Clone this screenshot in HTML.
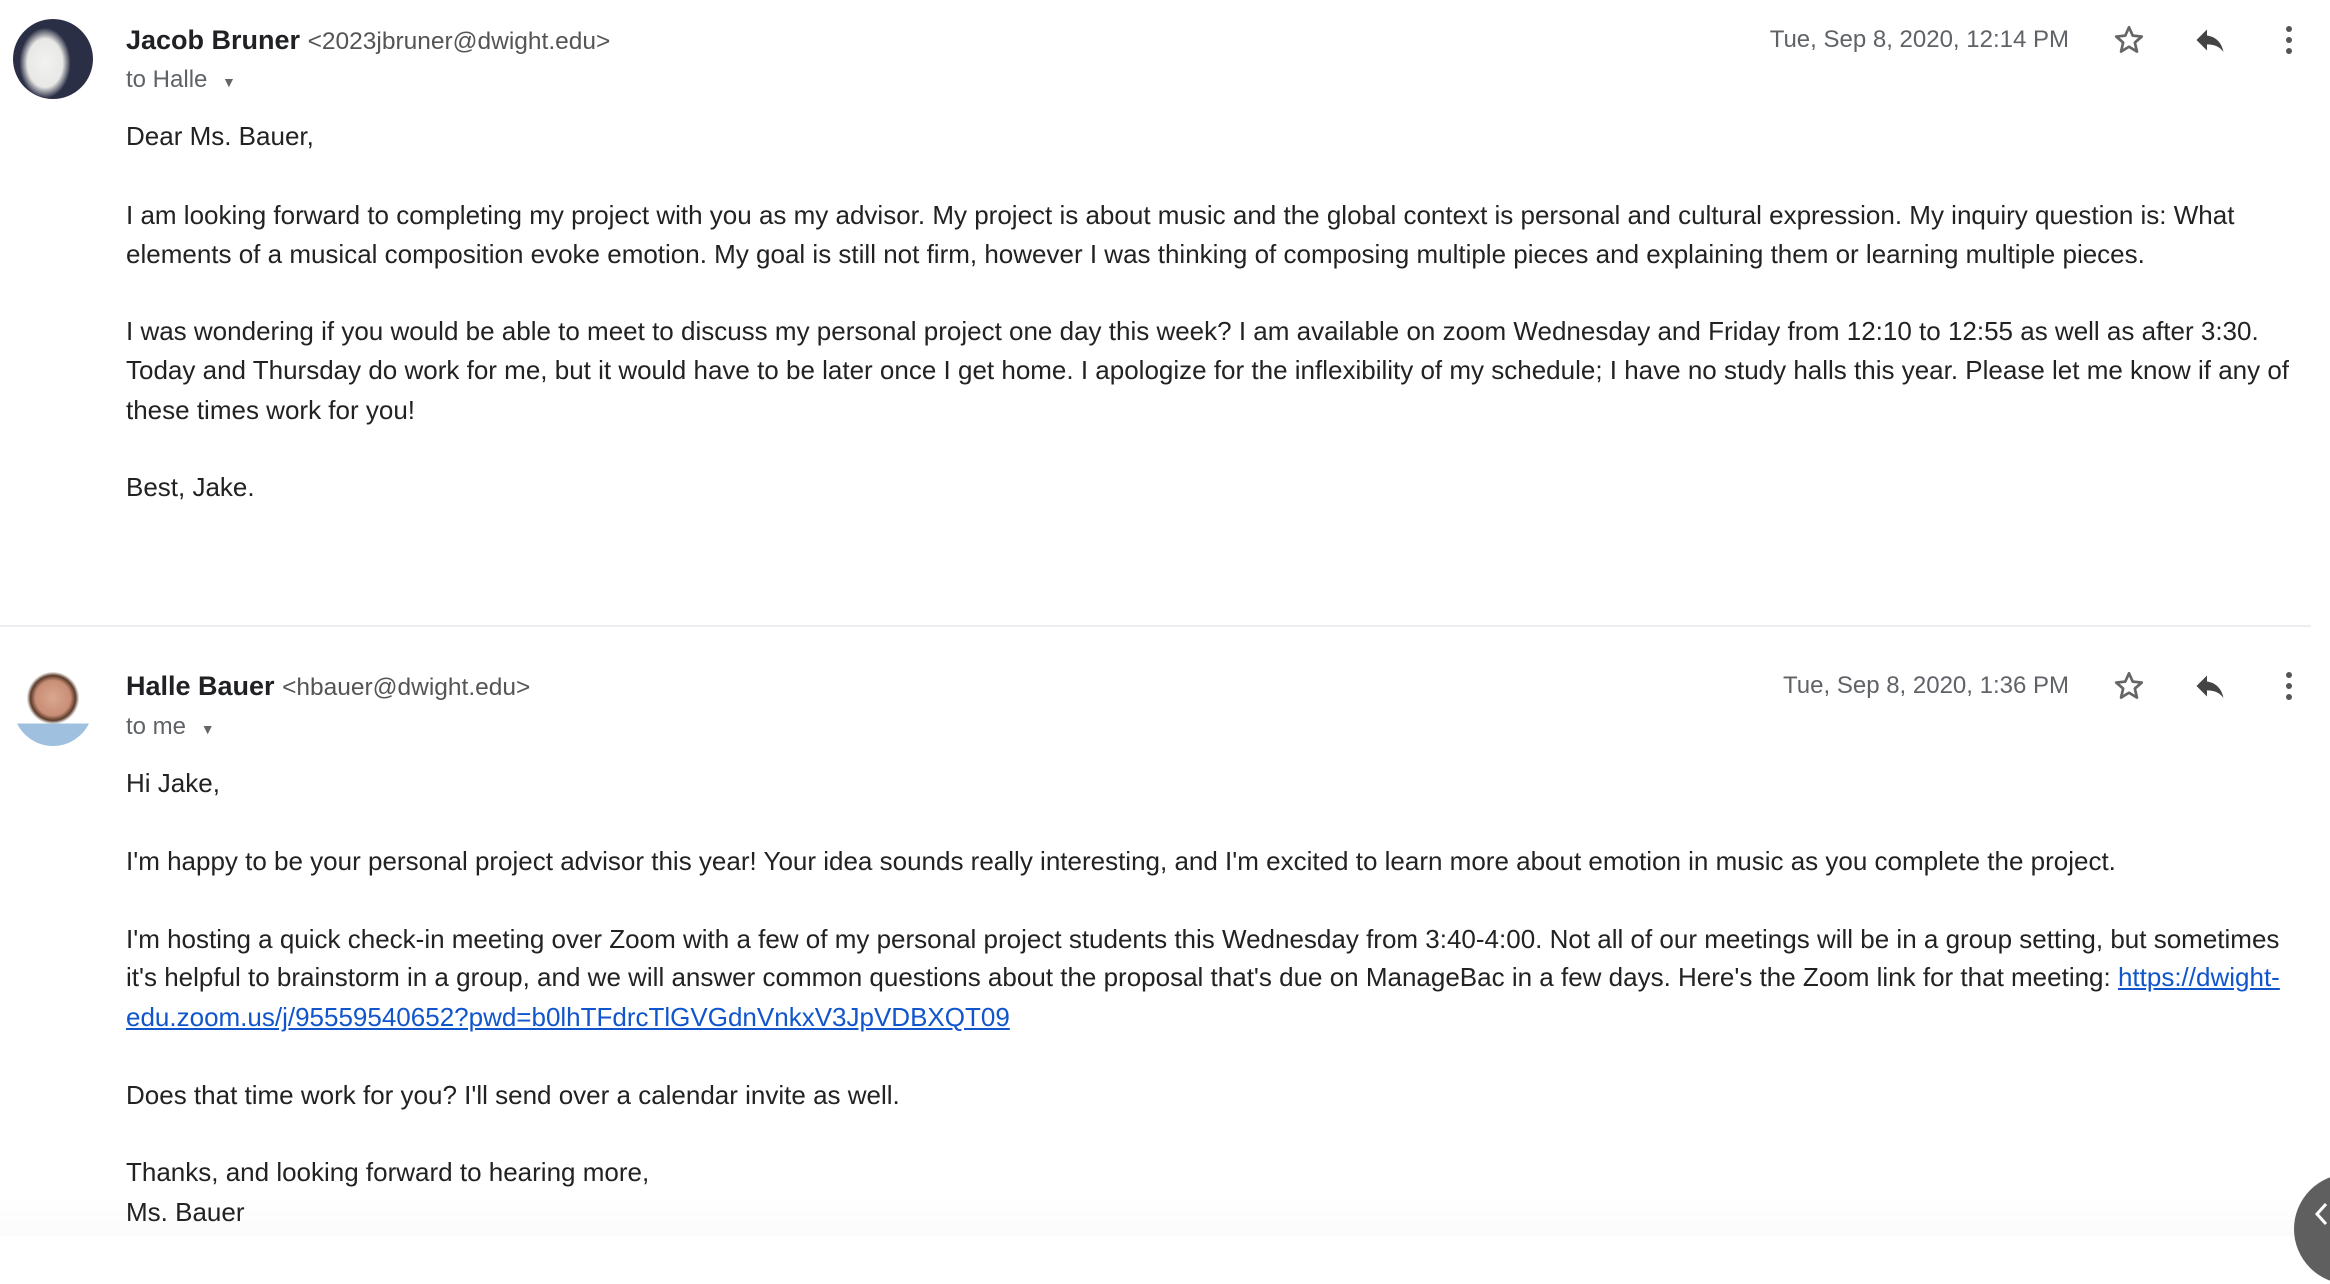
<!DOCTYPE html>
<html><head><meta charset="utf-8"><style>
*{margin:0;padding:0;box-sizing:border-box}
html,body{width:2330px;height:1236px;overflow:hidden;background:#fff;font-family:"Liberation Sans",Arial,sans-serif;color:#222}
.a{position:absolute;white-space:nowrap}
.b{font-size:26px;line-height:40px;left:126px;color:#222}
.name{font-size:27px;font-weight:bold;color:#202124;line-height:40px;left:126px}
.name span{font-weight:normal;font-size:24.5px;color:#555}
.to{font-size:24px;color:#5f6368;left:126px;line-height:36px}
.date{font-size:24px;color:#5f6368;line-height:36px;right:261px}
.av{position:absolute;width:80px;height:80px;border-radius:50%;overflow:hidden}
a{color:#1155cc;text-decoration:underline}
</style></head><body>
<div class="av" style="left:13px;top:19px;background:radial-gradient(ellipse 40% 55% at 40% 55%,#f2f2f0 0,#e8e8e6 55%,#2b2f45 80%);"></div>
<div class="a name" style="top:20px">Jacob Bruner <span>&lt;2023jbruner@dwight.edu&gt;</span></div>
<div class="a to" style="top:62px">to Halle <span style="font-size:14px;color:#666;margin-left:8px">▼</span></div>
<div class="a date" style="top:22px">Tue, Sep 8, 2020, 12:14 PM</div>
<svg class="a" style="left:2111px;top:22px" width="36" height="36" viewBox="0 0 24 24"><path d="M12 3.5l2.5 5.6 6 .6-4.6 4 1.4 6-5.3-3.2-5.3 3.2 1.4-6-4.6-4 6-.6z" fill="none" stroke="#666" stroke-width="1.8" stroke-linejoin="round"/></svg>
<svg class="a" style="left:2192px;top:22px" width="36" height="36" viewBox="0 0 24 24"><path d="M10 9V5l-7 7 7 7v-4.1c5 0 8.5 1.6 11 5.1-1-5-4-10-11-11z" fill="#444"/></svg>
<svg class="a" style="left:2275px;top:22px" width="28" height="36" viewBox="0 0 28 36"><circle cx="14" cy="7" r="3" fill="#555"/><circle cx="14" cy="18" r="3" fill="#555"/><circle cx="14" cy="29" r="3" fill="#555"/></svg>

<div class="a b" style="top:116px">Dear Ms. Bauer,</div>
<div class="a b" style="top:195px">I am looking forward to completing my project with you as my advisor. My project is about music and the global context is personal and cultural expression. My inquiry question is: What</div>
<div class="a b" style="top:234px">elements of a musical composition evoke emotion. My goal is still not firm, however I was thinking of composing multiple pieces and explaining them or learning multiple pieces.</div>
<div class="a b" style="top:311px">I was wondering if you would be able to meet to discuss my personal project one day this week? I am available on zoom Wednesday and Friday from 12:10 to 12:55 as well as after 3:30.</div>
<div class="a b" style="top:350px">Today and Thursday do work for me, but it would have to be later once I get home. I apologize for the inflexibility of my schedule; I have no study halls this year. Please let me know if any of</div>
<div class="a b" style="top:390px">these times work for you!</div>
<div class="a b" style="top:467px">Best, Jake.</div>

<div class="a" style="left:0;top:625px;width:2311px;height:2px;background:#eceef1"></div>

<div class="av" style="left:13px;top:666px;background:radial-gradient(circle at 50% 40%,#d9a78f 0,#c98e76 28%,#5b3b2a 36%,#fff 42%,#fff 60%,#fff 100%);"></div>
<div class="av" style="left:13px;top:666px;background:linear-gradient(to bottom,transparent 0,transparent 72%,#9fc0df 72%,#9fc0df 100%);"></div>
<div class="a name" style="top:666px">Halle Bauer <span>&lt;hbauer@dwight.edu&gt;</span></div>
<div class="a to" style="top:709px">to me <span style="font-size:14px;color:#666;margin-left:8px">▼</span></div>
<div class="a date" style="top:668px">Tue, Sep 8, 2020, 1:36 PM</div>
<svg class="a" style="left:2111px;top:668px" width="36" height="36" viewBox="0 0 24 24"><path d="M12 3.5l2.5 5.6 6 .6-4.6 4 1.4 6-5.3-3.2-5.3 3.2 1.4-6-4.6-4 6-.6z" fill="none" stroke="#666" stroke-width="1.8" stroke-linejoin="round"/></svg>
<svg class="a" style="left:2192px;top:668px" width="36" height="36" viewBox="0 0 24 24"><path d="M10 9V5l-7 7 7 7v-4.1c5 0 8.5 1.6 11 5.1-1-5-4-10-11-11z" fill="#444"/></svg>
<svg class="a" style="left:2275px;top:668px" width="28" height="36" viewBox="0 0 28 36"><circle cx="14" cy="7" r="3" fill="#555"/><circle cx="14" cy="18" r="3" fill="#555"/><circle cx="14" cy="29" r="3" fill="#555"/></svg>

<div class="a b" style="top:763px">Hi Jake,</div>
<div class="a b" style="top:841px">I'm happy to be your personal project advisor this year! Your idea sounds really interesting, and I'm excited to learn more about emotion in music as you complete the project.</div>
<div class="a b" style="top:919px">I'm hosting a quick check-in meeting over Zoom with a few of my personal project students this Wednesday from 3:40-4:00. Not all of our meetings will be in a group setting, but sometimes</div>
<div class="a b" style="top:957px">it's helpful to brainstorm in a group, and we will answer common questions about the proposal that's due on ManageBac in a few days. Here's the Zoom link for that meeting: <a>https://dwight-</a></div>
<div class="a b" style="top:997px"><a>edu.zoom.us/j/95559540652?pwd=b0lhTFdrcTlGVGdnVnkxV3JpVDBXQT09</a></div>
<div class="a b" style="top:1075px">Does that time work for you? I'll send over a calendar invite as well.</div>
<div class="a b" style="top:1152px">Thanks, and looking forward to hearing more,</div>
<div class="a b" style="top:1192px">Ms. Bauer</div>

<div class="a" style="left:0;top:1196px;width:2330px;height:40px;background:linear-gradient(to bottom,rgba(0,0,0,0),rgba(0,0,0,0.015))"></div>
<div class="a" style="left:2294px;top:1174px;width:110px;height:110px;border-radius:50%;background:#5f5f5f"></div>
<svg class="a" style="left:2312px;top:1200px" width="18" height="28" viewBox="0 0 18 28"><path d="M14 4L5 14l9 10" fill="none" stroke="#fff" stroke-width="3"/></svg>
</body></html>
